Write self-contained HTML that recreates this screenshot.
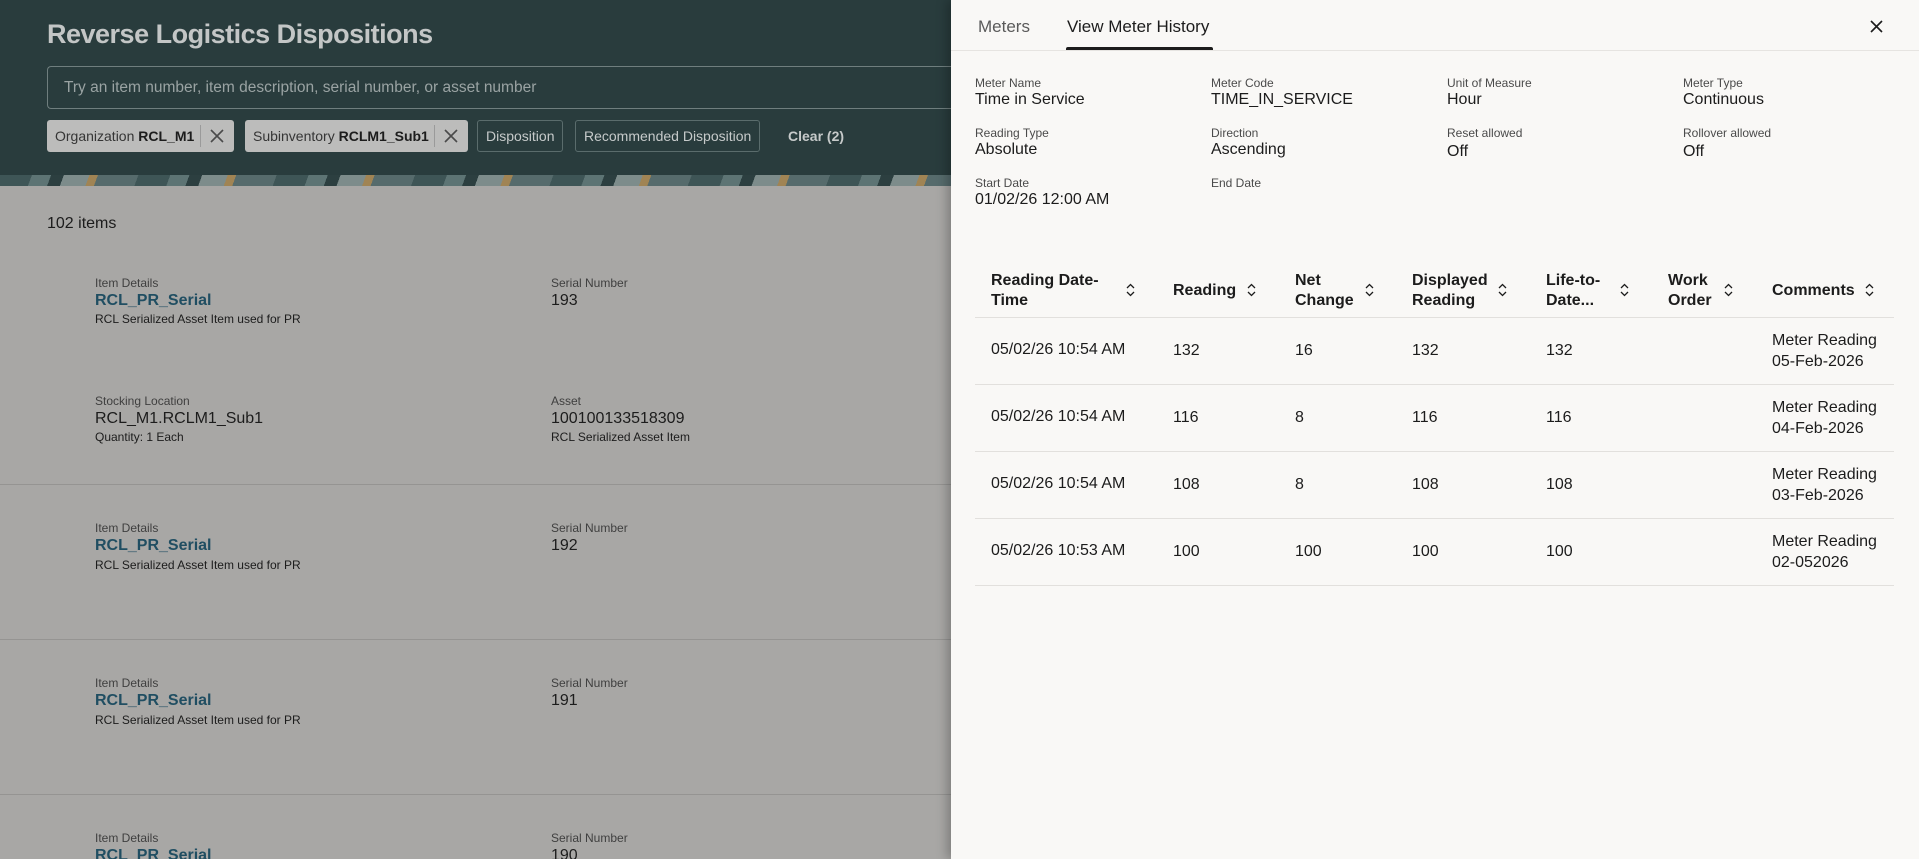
<!DOCTYPE html>
<html style="width:1919px;height:859px;overflow:hidden"><head><meta charset="utf-8"><style>
*{box-sizing:border-box;margin:0;padding:0}
body{width:1919px;height:859px;overflow:hidden;position:relative;font-family:"Liberation Sans",sans-serif;background:#a8a7a5;color:#1c1c1c}
.abs{position:absolute;white-space:nowrap}
.hdr{position:absolute;left:0;top:0;width:951px;height:175px;background:#293c3d}
.stripe{position:absolute;left:0;top:175px;width:951px;height:11px;background:repeating-linear-gradient(110deg,#3e5556 0 30px,#5d7474 30px 48px,#2c3f40 48px 60px,#7d8c8b 60px 84px,#a08454 84px 92px,#566b6c 92px 130px)}
.title{left:47px;top:19px;font-size:27px;font-weight:bold;color:#c3c6c6;letter-spacing:-0.5px}
.search{position:absolute;left:47px;top:66px;width:920px;height:43px;border:1px solid #6f7e7e;border-right:none;border-radius:4px 0 0 4px}
.search span{position:absolute;left:16px;top:12px;font-size:15.5px;color:#9aa3a3}
.chip{position:absolute;top:120px;height:32px;border-radius:3px;font-size:14px;line-height:32px;padding-left:8px}
.chip.f{background:#bcbcbb;color:#353535}
.chip.f b{color:#1c1c1c}
.chip.o{border:1px solid #5a6c6c;color:#c6caca;line-height:30px}
.x{position:absolute;top:5px;width:1px;height:22px;background:#9a9a9a}
.lbl{font-size:12px;color:#3f3f3f}
.val{font-size:16px;color:#1c1c1c}
.lnk{font-size:16px;font-weight:bold;color:#204e62}
.sm{font-size:12px;color:#1c1c1c}
.sep{position:absolute;left:0;width:951px;height:1px;background:#959492}
.panel{position:absolute;left:951px;top:0;width:968px;height:859px;background:#f9f8f6;box-shadow:-4px 0 10px rgba(0,0,0,.25)}
.p{position:absolute;white-space:nowrap}
.pl{font-size:12px;color:#4a4a4a}
.pv{font-size:16px;color:#1c1c1c}
.th{font-size:16px;font-weight:bold;color:#1c1c1c;line-height:20px}
.td{font-size:16px;color:#1c1c1c}
.hl{position:absolute;left:24px;width:919px;height:1px;background:#e2e0dd}
</style></head><body>
<div class="hdr"></div><div class="stripe"></div>
<div class="abs title">Reverse Logistics Dispositions</div>
<div class="search"><span>Try an item number, item description, serial number, or asset number</span></div>
<div class="chip f" style="left:47px;width:187px">Organization <b>RCL_M1</b><div class="x" style="left:153px"></div><svg style="position:absolute;left:163px;top:9px" width="14" height="14" viewBox="0 0 14 14"><path d="M1 1L13 13M13 1L1 13" stroke="#4a4a4a" stroke-width="1.6"/></svg></div>
<div class="chip f" style="left:245px;width:223px">Subinventory <b>RCLM1_Sub1</b><div class="x" style="left:189px"></div><svg style="position:absolute;left:199px;top:9px" width="14" height="14" viewBox="0 0 14 14"><path d="M1 1L13 13M13 1L1 13" stroke="#4a4a4a" stroke-width="1.6"/></svg></div>
<div class="chip o" style="left:477px;width:86px">Disposition</div>
<div class="chip o" style="left:575px;width:185px">Recommended Disposition</div>
<div class="abs" style="left:788px;top:128px;font-size:14px;font-weight:bold;color:#c6caca">Clear (2)</div>

<div class="abs" style="left:47px;top:215px;font-size:16px;color:#1c1c1c">102 items</div>

<div class="abs lbl" style="left:95px;top:276px">Item Details</div>
<div class="abs lnk" style="left:95px;top:292px">RCL_PR_Serial</div>
<div class="abs sm" style="left:95px;top:312px">RCL Serialized Asset Item used for PR</div>
<div class="abs lbl" style="left:551px;top:276px">Serial Number</div>
<div class="abs val" style="left:551px;top:292px">193</div>
<div class="abs lbl" style="left:95px;top:394px">Stocking Location</div>
<div class="abs val" style="left:95px;top:410px">RCL_M1.RCLM1_Sub1</div>
<div class="abs sm" style="left:95px;top:430px">Quantity: 1 Each</div>
<div class="abs lbl" style="left:551px;top:394px">Asset</div>
<div class="abs val" style="left:551px;top:410px">100100133518309</div>
<div class="abs sm" style="left:551px;top:430px">RCL Serialized Asset Item</div>
<div class="sep" style="top:484px"></div>

<div class="abs lbl" style="left:95px;top:521px">Item Details</div>
<div class="abs lnk" style="left:95px;top:537px">RCL_PR_Serial</div>
<div class="abs sm" style="left:95px;top:558px">RCL Serialized Asset Item used for PR</div>
<div class="abs lbl" style="left:551px;top:521px">Serial Number</div>
<div class="abs val" style="left:551px;top:537px">192</div>
<div class="sep" style="top:639px"></div>

<div class="abs lbl" style="left:95px;top:676px">Item Details</div>
<div class="abs lnk" style="left:95px;top:692px">RCL_PR_Serial</div>
<div class="abs sm" style="left:95px;top:713px">RCL Serialized Asset Item used for PR</div>
<div class="abs lbl" style="left:551px;top:676px">Serial Number</div>
<div class="abs val" style="left:551px;top:692px">191</div>
<div class="sep" style="top:794px"></div>

<div class="abs lbl" style="left:95px;top:831px">Item Details</div>
<div class="abs lnk" style="left:95px;top:847px">RCL_PR_Serial</div>
<div class="abs lbl" style="left:551px;top:831px">Serial Number</div>
<div class="abs val" style="left:551px;top:847px">190</div>

<div class="panel">
<div class="p" style="left:27px;top:17px;font-size:17px;color:#5a5a5a">Meters</div>
<div class="p" style="left:116px;top:17px;font-size:17px;color:#1c1c1c">View Meter History</div>
<div style="position:absolute;left:0;top:50px;width:968px;height:1px;background:#e6e4e1"></div>
<div style="position:absolute;left:115px;top:47px;width:147px;height:3px;background:#1c1c1c;border-radius:2px 2px 0 0"></div>
<svg style="position:absolute;left:919px;top:20px" width="13" height="13" viewBox="0 0 13 13"><path d="M1 1L12 12M12 1L1 12" stroke="#1c1c1c" stroke-width="1.6"/></svg>

<div class="p pl" style="left:24px;top:76px">Meter Name</div><div class="p pv" style="left:24px;top:91px">Time in Service</div>
<div class="p pl" style="left:260px;top:76px">Meter Code</div><div class="p pv" style="left:260px;top:91px">TIME_IN_SERVICE</div>
<div class="p pl" style="left:496px;top:76px">Unit of Measure</div><div class="p pv" style="left:496px;top:91px">Hour</div>
<div class="p pl" style="left:732px;top:76px">Meter Type</div><div class="p pv" style="left:732px;top:91px">Continuous</div>
<div class="p pl" style="left:24px;top:126px">Reading Type</div><div class="p pv" style="left:24px;top:141px">Absolute</div>
<div class="p pl" style="left:260px;top:126px">Direction</div><div class="p pv" style="left:260px;top:141px">Ascending</div>
<div class="p pl" style="left:496px;top:126px">Reset allowed</div><div class="p pv" style="left:496px;top:143px">Off</div>
<div class="p pl" style="left:732px;top:126px">Rollover allowed</div><div class="p pv" style="left:732px;top:143px">Off</div>
<div class="p pl" style="left:24px;top:176px">Start Date</div><div class="p pv" style="left:24px;top:191px">01/02/26 12:00 AM</div>
<div class="p pl" style="left:260px;top:176px">End Date</div>

<div class="p th" style="left:40px;top:271px">Reading Date-<br>Time</div>
<div class="p th" style="left:222px;top:281px">Reading</div>
<div class="p th" style="left:344px;top:271px">Net<br>Change</div>
<div class="p th" style="left:461px;top:271px">Displayed<br>Reading</div>
<div class="p th" style="left:595px;top:271px">Life-to-<br>Date...</div>
<div class="p th" style="left:717px;top:271px">Work<br>Order</div>
<div class="p th" style="left:821px;top:281px">Comments</div>
<svg width="0" height="0" style="position:absolute;left:0;top:0"><defs><g id="s"><path d="M1 5L4.5 1.5L8 5M1 9L4.5 12.5L8 9" fill="none" stroke="#1c1c1c" stroke-width="1.3"/></g></defs></svg>
<svg class="p" style="left:175px;top:283px" width="10" height="14"><use href="#s"/></svg>
<svg class="p" style="left:296px;top:283px" width="10" height="14"><use href="#s"/></svg>
<svg class="p" style="left:414px;top:283px" width="10" height="14"><use href="#s"/></svg>
<svg class="p" style="left:547px;top:283px" width="10" height="14"><use href="#s"/></svg>
<svg class="p" style="left:669px;top:283px" width="10" height="14"><use href="#s"/></svg>
<svg class="p" style="left:773px;top:283px" width="10" height="14"><use href="#s"/></svg>
<svg class="p" style="left:914px;top:283px" width="10" height="14"><use href="#s"/></svg>
<div class="hl" style="top:317px"></div>

<div class="p td" style="left:40px;top:341px">05/02/26 10:54 AM</div><div class="p td" style="left:222px;top:342px">132</div><div class="p td" style="left:344px;top:342px">16</div><div class="p td" style="left:461px;top:342px">132</div><div class="p td" style="left:595px;top:342px">132</div><div class="p td" style="left:821px;top:330px;line-height:21px">Meter Reading<br>05-Feb-2026</div>
<div class="hl" style="top:384px"></div>
<div class="p td" style="left:40px;top:408px">05/02/26 10:54 AM</div><div class="p td" style="left:222px;top:409px">116</div><div class="p td" style="left:344px;top:409px">8</div><div class="p td" style="left:461px;top:409px">116</div><div class="p td" style="left:595px;top:409px">116</div><div class="p td" style="left:821px;top:397px;line-height:21px">Meter Reading<br>04-Feb-2026</div>
<div class="hl" style="top:451px"></div>
<div class="p td" style="left:40px;top:475px">05/02/26 10:54 AM</div><div class="p td" style="left:222px;top:476px">108</div><div class="p td" style="left:344px;top:476px">8</div><div class="p td" style="left:461px;top:476px">108</div><div class="p td" style="left:595px;top:476px">108</div><div class="p td" style="left:821px;top:464px;line-height:21px">Meter Reading<br>03-Feb-2026</div>
<div class="hl" style="top:518px"></div>
<div class="p td" style="left:40px;top:542px">05/02/26 10:53 AM</div><div class="p td" style="left:222px;top:543px">100</div><div class="p td" style="left:344px;top:543px">100</div><div class="p td" style="left:461px;top:543px">100</div><div class="p td" style="left:595px;top:543px">100</div><div class="p td" style="left:821px;top:531px;line-height:21px">Meter Reading<br>02-052026</div>
<div class="hl" style="top:585px"></div>
</div>
</body></html>
